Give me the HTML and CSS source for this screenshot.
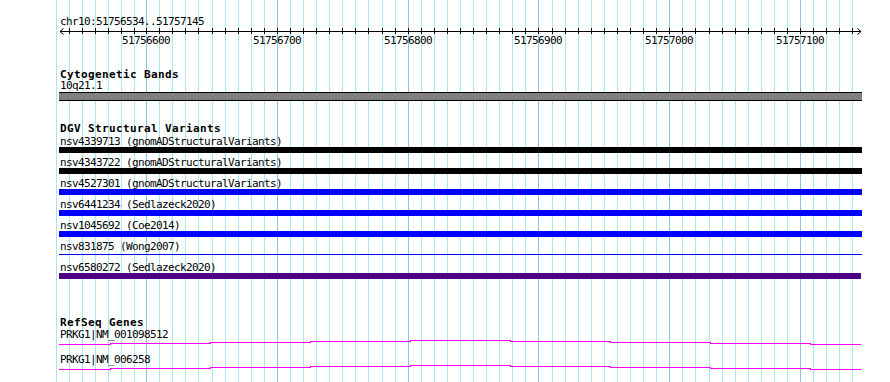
FILE: index.html
```html
<!DOCTYPE html>
<html>
<head>
<meta charset="utf-8">
<link rel="stylesheet" href="styles.css">
</head>
<body>
<div class="panel">
  <svg class="grid" width="890" height="382" viewBox="0 0 890 382">
    <g class="minor">
      <rect x="56" y="0" width="1" height="382"/><rect x="69" y="0" width="1" height="382"/><rect x="82" y="0" width="1" height="382"/><rect x="95" y="0" width="1" height="382"/><rect x="108" y="0" width="1" height="382"/><rect x="121" y="0" width="1" height="382"/><rect x="134" y="0" width="1" height="382"/>
      <rect x="159" y="0" width="1" height="382"/><rect x="172" y="0" width="1" height="382"/><rect x="185" y="0" width="1" height="382"/><rect x="198" y="0" width="1" height="382"/><rect x="212" y="0" width="1" height="382"/><rect x="225" y="0" width="1" height="382"/><rect x="238" y="0" width="1" height="382"/><rect x="251" y="0" width="1" height="382"/><rect x="264" y="0" width="1" height="382"/>
      <rect x="290" y="0" width="1" height="382"/><rect x="303" y="0" width="1" height="382"/><rect x="316" y="0" width="1" height="382"/><rect x="329" y="0" width="1" height="382"/><rect x="342" y="0" width="1" height="382"/><rect x="355" y="0" width="1" height="382"/><rect x="368" y="0" width="1" height="382"/><rect x="382" y="0" width="1" height="382"/><rect x="395" y="0" width="1" height="382"/>
      <rect x="421" y="0" width="1" height="382"/><rect x="434" y="0" width="1" height="382"/><rect x="447" y="0" width="1" height="382"/><rect x="460" y="0" width="1" height="382"/><rect x="473" y="0" width="1" height="382"/><rect x="486" y="0" width="1" height="382"/><rect x="499" y="0" width="1" height="382"/><rect x="512" y="0" width="1" height="382"/><rect x="525" y="0" width="1" height="382"/>
      <rect x="552" y="0" width="1" height="382"/><rect x="565" y="0" width="1" height="382"/><rect x="578" y="0" width="1" height="382"/><rect x="591" y="0" width="1" height="382"/><rect x="604" y="0" width="1" height="382"/><rect x="617" y="0" width="1" height="382"/><rect x="630" y="0" width="1" height="382"/><rect x="643" y="0" width="1" height="382"/><rect x="656" y="0" width="1" height="382"/>
      <rect x="682" y="0" width="1" height="382"/><rect x="695" y="0" width="1" height="382"/><rect x="709" y="0" width="1" height="382"/><rect x="722" y="0" width="1" height="382"/><rect x="735" y="0" width="1" height="382"/><rect x="748" y="0" width="1" height="382"/><rect x="761" y="0" width="1" height="382"/><rect x="774" y="0" width="1" height="382"/><rect x="787" y="0" width="1" height="382"/>
      <rect x="813" y="0" width="1" height="382"/><rect x="826" y="0" width="1" height="382"/><rect x="839" y="0" width="1" height="382"/><rect x="852" y="0" width="1" height="382"/>
    </g>
    <g class="major">
      <rect x="146" y="0" width="1" height="382"/><rect x="277" y="0" width="1" height="382"/><rect x="408" y="0" width="1" height="382"/><rect x="538" y="0" width="1" height="382"/><rect x="669" y="0" width="1" height="382"/><rect x="800" y="0" width="1" height="382"/>
    </g>
  </svg>

  <div class="content">
    <div class="ruler-label">chr10:51756534..51757145</div>
    <svg class="ruler" width="803" height="18" viewBox="0 0 803 18">
      <rect class="ink" x="1" y="3" width="801" height="1"/>
      <path class="arrow" d="M4.5,0.5 L1,3.5 L4.5,6.5"/>
      <path class="arrow" d="M798.5,0.5 L802,3.5 L798.5,6.5"/>
      <g class="ink">
        <rect x="10" y="0" width="1" height="6"/><rect x="23" y="0" width="1" height="6"/><rect x="36" y="0" width="1" height="6"/><rect x="49" y="0" width="1" height="6"/><rect x="62" y="0" width="1" height="6"/><rect x="75" y="0" width="1" height="6"/><rect x="87" y="0" width="1" height="6"/>
        <rect x="100" y="0" width="1" height="6"/><rect x="113" y="0" width="1" height="6"/><rect x="126" y="0" width="1" height="6"/><rect x="139" y="0" width="1" height="6"/><rect x="153" y="0" width="1" height="6"/><rect x="166" y="0" width="1" height="6"/><rect x="179" y="0" width="1" height="6"/><rect x="192" y="0" width="1" height="6"/><rect x="205" y="0" width="1" height="6"/><rect x="218" y="0" width="1" height="6"/>
        <rect x="231" y="0" width="1" height="6"/><rect x="244" y="0" width="1" height="6"/><rect x="257" y="0" width="1" height="6"/><rect x="270" y="0" width="1" height="6"/><rect x="283" y="0" width="1" height="6"/><rect x="296" y="0" width="1" height="6"/><rect x="309" y="0" width="1" height="6"/><rect x="323" y="0" width="1" height="6"/><rect x="336" y="0" width="1" height="6"/><rect x="349" y="0" width="1" height="6"/>
        <rect x="362" y="0" width="1" height="6"/><rect x="375" y="0" width="1" height="6"/><rect x="388" y="0" width="1" height="6"/><rect x="401" y="0" width="1" height="6"/><rect x="414" y="0" width="1" height="6"/><rect x="427" y="0" width="1" height="6"/><rect x="440" y="0" width="1" height="6"/><rect x="453" y="0" width="1" height="6"/><rect x="466" y="0" width="1" height="6"/><rect x="479" y="0" width="1" height="6"/>
        <rect x="493" y="0" width="1" height="6"/><rect x="506" y="0" width="1" height="6"/><rect x="519" y="0" width="1" height="6"/><rect x="532" y="0" width="1" height="6"/><rect x="545" y="0" width="1" height="6"/><rect x="558" y="0" width="1" height="6"/><rect x="571" y="0" width="1" height="6"/><rect x="584" y="0" width="1" height="6"/><rect x="597" y="0" width="1" height="6"/><rect x="610" y="0" width="1" height="6"/>
        <rect x="623" y="0" width="1" height="6"/><rect x="636" y="0" width="1" height="6"/><rect x="650" y="0" width="1" height="6"/><rect x="663" y="0" width="1" height="6"/><rect x="676" y="0" width="1" height="6"/><rect x="689" y="0" width="1" height="6"/><rect x="702" y="0" width="1" height="6"/><rect x="715" y="0" width="1" height="6"/><rect x="728" y="0" width="1" height="6"/><rect x="741" y="0" width="1" height="6"/>
        <rect x="754" y="0" width="1" height="6"/><rect x="767" y="0" width="1" height="6"/><rect x="780" y="0" width="1" height="6"/><rect x="793" y="0" width="1" height="6"/>
      </g>
      <text class="tick-label" x="63" y="16">51756600</text>
      <text class="tick-label" x="194" y="16">51756700</text>
      <text class="tick-label" x="325" y="16">51756800</text>
      <text class="tick-label" x="455" y="16">51756900</text>
      <text class="tick-label" x="586" y="16">51757000</text>
      <text class="tick-label" x="717" y="16">51757100</text>
    </svg>

    <section class="track track-cyto">
      <div class="track-title">Cytogenetic Bands</div>
      <div class="label">10q21.1</div>
      <div class="band"></div>
    </section>

    <section class="track track-dgv">
      <div class="track-title">DGV Structural Variants</div>
      <div class="rows">
        <div class="row"><div class="label">nsv4339713 (gnomADStructuralVariants)</div><div class="bar bar-black"></div></div>
        <div class="row"><div class="label">nsv4343722 (gnomADStructuralVariants)</div><div class="bar bar-black"></div></div>
        <div class="row"><div class="label">nsv4527301 (gnomADStructuralVariants)</div><div class="bar bar-blue"></div></div>
        <div class="row"><div class="label">nsv6441234 (Sedlazeck2020)</div><div class="bar bar-blue"></div></div>
        <div class="row"><div class="label">nsv1045692 (Coe2014)</div><div class="bar bar-blue"></div></div>
        <div class="row"><div class="label">nsv831875 (Wong2007)</div><div class="bar bar-thin"></div></div>
        <div class="row"><div class="label">nsv6580272 (Sedlazeck2020)</div><div class="bar bar-purple"></div></div>
      </div>
    </section>

    <section class="track track-genes">
      <div class="track-title">RefSeq Genes</div>
      <div class="gene-rows">
        <div class="gene">
          <div class="label">PRKG1|NM_001098512</div>
          <svg class="intron" width="803" height="14" viewBox="0 0 803 14">
            <rect x="0" y="4" width="52" height="1"/><rect x="51" y="3" width="101" height="1"/><rect x="151" y="2" width="101" height="1"/><rect x="251" y="1" width="101" height="1"/><rect x="351" y="0" width="101" height="1"/><rect x="451" y="1" width="101" height="1"/><rect x="551" y="2" width="101" height="1"/><rect x="651" y="3" width="101" height="1"/><rect x="751" y="4" width="51" height="1"/>
          </svg>
        </div>
        <div class="gene">
          <div class="label">PRKG1|NM_006258</div>
          <svg class="intron" width="803" height="14" viewBox="0 0 803 14">
            <rect x="0" y="4" width="52" height="1"/><rect x="51" y="3" width="101" height="1"/><rect x="151" y="2" width="101" height="1"/><rect x="251" y="1" width="101" height="1"/><rect x="351" y="0" width="101" height="1"/><rect x="451" y="1" width="101" height="1"/><rect x="551" y="2" width="101" height="1"/><rect x="651" y="3" width="101" height="1"/><rect x="751" y="4" width="51" height="1"/>
          </svg>
        </div>
      </div>
    </section>
  </div>
</div>
</body>
</html>
```

FILE: styles.css
```css
html, body {
  margin: 0;
  padding: 0;
  background: #ffffff;
}

.panel {
  position: relative;
  width: 890px;
  height: 382px;
  overflow: hidden;
  background: #ffffff;
  font-family: "DejaVu Sans Mono", "Liberation Mono", monospace;
  font-size: 11px;
  letter-spacing: -0.62px;
  color: #000000;
}

.grid {
  position: absolute;
  top: 0;
  left: 0;
  display: block;
}

.grid .minor { fill: #a6e6ee; }
.grid .major { fill: #84c8e8; }

.content {
  position: relative;
  padding-top: 15px;
  padding-left: 59px;
  display: flex;
  flex-direction: column;
  align-items: flex-start;
}

.ruler-label {
  line-height: 13px;
  height: 13px;
  padding-left: 1px;
  white-space: pre;
}

.ruler {
  display: block;
}

.ruler .ink { fill: #000000; }

.ruler .arrow {
  fill: none;
  stroke: #000000;
  stroke-width: 1;
}

.tick-label {
  font-family: "DejaVu Sans Mono", "Liberation Mono", monospace;
  font-size: 11px;
  letter-spacing: -0.62px;
  fill: #000000;
}

.track {
  display: flex;
  flex-direction: column;
  align-items: flex-start;
}

.track-cyto { margin-top: 23px; }
.track-dgv { margin-top: 22px; }
.track-genes { margin-top: 38px; }

.track-title {
  font-weight: bold;
  letter-spacing: 0.38px;
  line-height: 11px;
  height: 11px;
  padding-left: 1px;
  white-space: pre;
}

.label {
  line-height: 11px;
  height: 11px;
  padding-left: 1px;
  white-space: pre;
}

.band {
  margin-top: 1px;
  width: 803px;
  height: 7px;
  background: #808080;
  border-top: 1px solid #000000;
  border-bottom: 1px solid #000000;
}

.rows {
  margin-top: 2px;
  display: flex;
  flex-direction: column;
  gap: 4px;
}

.row {
  display: flex;
  flex-direction: column;
  align-items: flex-start;
}

.bar {
  width: 803px;
  height: 6px;
}

.bar-black { background: #000000; }
.bar-blue { background: #0000ff; }
.bar-purple { background: #4b0082; width: 802px; }

.bar-thin {
  height: 1px;
  margin: 2px 0 3px;
  background: #0000ff;
}

.gene-rows {
  margin-top: 1px;
  display: flex;
  flex-direction: column;
}

.gene {
  display: flex;
  flex-direction: column;
  align-items: flex-start;
}

.intron {
  display: block;
  fill: #ff00ff;
}
```
